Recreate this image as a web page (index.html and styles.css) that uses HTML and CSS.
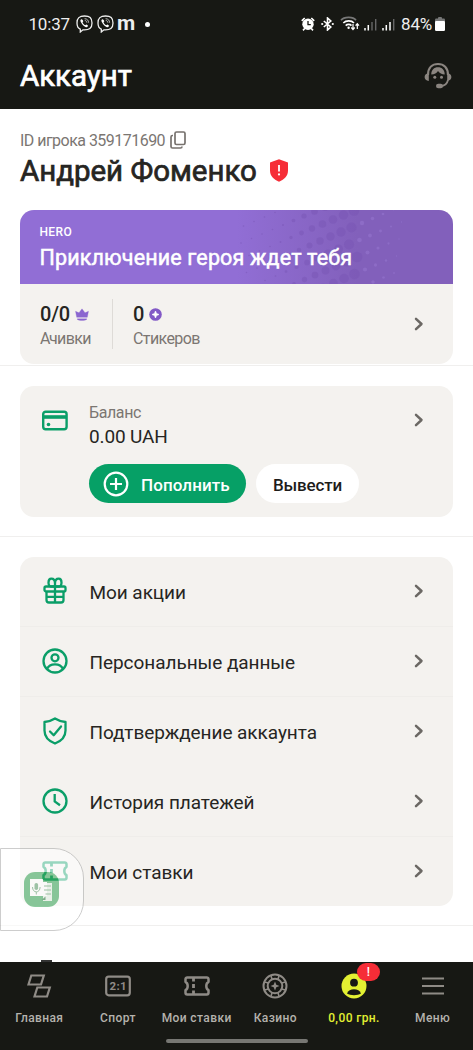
FILE: index.html
```
<!DOCTYPE html>
<html lang="ru">
<head>
<meta charset="utf-8">
<title>Аккаунт</title>
<link rel="stylesheet" href="styles.css">
</head>
<body>
<svg class="defs" width="0" height="0">
  <defs>
    <symbol id="chev" viewBox="0 0 12 16"><path d="M3 2.800 8.500 8 3 13.200" fill="none" stroke="#6b6864" stroke-width="2.500" stroke-linecap="round" stroke-linejoin="round"/></symbol>
    <symbol id="ticket" viewBox="0 0 26 20"><path d="M3.200 1.500h19.600a1.700 1.700 0 0 1 1.700 1.700v2.600c-1.500.8-2.200 2.300-2.200 4.200s.7 3.400 2.200 4.200v2.600a1.700 1.700 0 0 1-1.700 1.700H3.200a1.700 1.700 0 0 1-1.700-1.700v-2.600c1.500-.8 2.200-2.300 2.200-4.200s-.7-3.400-2.200-4.200V3.200a1.700 1.700 0 0 1 1.700-1.700z" fill="none" stroke="currentColor" stroke-width="2.500" stroke-linejoin="round"/><path d="M9.500 2v3.600M9.500 8v4M9.500 14.400V18" stroke="currentColor" stroke-width="2.800"/></symbol>
    <symbol id="viber" viewBox="0 0 17 18"><path d="M8.500 1C3.300 1 1 2.900 1 8c0 3.300 1 5.300 3.300 6.200V17l2.600-2.200c6.600.4 9.100-1.500 9.100-6.800S13.700 1 8.500 1z" fill="none" stroke="#eee" stroke-width="1.300"/><path d="M5.300 4.200c-1 .6-1.100 1.500-.6 2.600 1 2.300 2.500 4 4.800 5.100 1.200.6 2 .2 2.600-.8.300-.5-1.300-1.800-1.900-1.700-.5.100-.7.900-1.200.7C7.900 9.600 7 8.600 6.600 7.400c-.1-.5.700-.7.700-1.200 0-.6-1.300-2.300-2-2z" fill="#fff"/><path d="M8.600 3.700c2.600.1 3.900 1.600 4 4M8.800 5.500c1.400.2 2 .9 2.100 2.200" fill="none" stroke="#ddd" stroke-width=".8"/></symbol>
  </defs>
</svg>

<div class="screen">
  <header class="top">
    <div class="status">
      <span class="time">10:37</span>
      <svg class="vb" width="17" height="18"><use href="#viber"/></svg>
      <svg class="vb" width="17" height="18"><use href="#viber"/></svg>
      <b class="m">m</b>
      <i class="dot"></i>
      <div class="right">
        <svg width="14" height="14" viewBox="0 0 14 14"><path d="M.8 3.800 3.700 1M13.200 3.800 10.300 1M2 13.300l1.700-1.800M12 13.300l-1.700-1.800" stroke="#fff" stroke-width="1.700"/><circle cx="7" cy="7.300" r="5.700" fill="#fff"/><path d="M7 4v3.700h2.800" fill="none" stroke="#171814" stroke-width="1.300"/></svg>
        <svg class="bt" width="13" height="14" viewBox="0 0 13 14"><path d="M2.800 4 9.800 10 6.500 13V1l3.300 3-7 6" fill="none" stroke="#fff" stroke-width="1.600"/><circle cx="1.200" cy="7" r="1.100" fill="#fff"/><circle cx="11.800" cy="7" r="1.100" fill="#fff"/></svg>
        <svg class="wifi" width="20" height="15" viewBox="0 0 20 15"><g fill="none" stroke="#fff" stroke-width="1.600"><path d="M1 4.300C4 .6 13 .2 16 4.300" stroke="#777"/><path d="M3.300 7c2.700-2.900 8.200-2.900 10.700 0"/><path d="M5.700 9.600c1.600-1.600 4.300-1.600 5.800 0"/></g><circle cx="8.600" cy="11.800" r="1.200" fill="#fff"/><path d="M13 8v5M11.300 11.500 13 13.600l1.700-2.100M17.300 13V8M15.600 9.700l1.700-2.100L19 9.700" fill="none" stroke="#fff" stroke-width="1.200"/></svg>
        <svg class="sig" width="13" height="13" viewBox="0 0 13 13"><path d="M1 10v2.500M4.300 7v5.500" stroke="#fff" stroke-width="1.500"/><path d="M8 4v8.500M11.700 1v11.500" stroke="#666" stroke-width="1.400"/></svg>
        <svg class="sig2" width="13" height="13" viewBox="0 0 13 13"><path d="M1 10v2.500M4.300 7v5.500M8 4v8.500" stroke="#fff" stroke-width="1.500"/><path d="M11.700 1v11.500" stroke="#666" stroke-width="1.400"/></svg>
        <span class="pct">84%</span>
        <svg class="bat" width="10" height="14" viewBox="0 0 10 14"><rect x="3" y="0" width="4" height="3" rx="1" fill="#777"/><rect y="1.500" width="10" height="4" rx="1.200" fill="#777"/><rect y="4" width="10" height="10" rx="1.200" fill="#fff"/></svg>
      </div>
    </div>
    <div class="titlebar">
      <h1>Аккаунт</h1>
      <svg width="28" height="27" viewBox="0 0 28 27"><g fill="none" stroke="#8b8580"><path d="M4 13C4 5.500 8.200 2 14 2s10 3.500 10 11" stroke-width="2.200"/><path d="M24 18c-1 4.500-3.500 6-7.500 6.200" stroke-width="1.800"/></g><path d="M4.800 11v8C2.300 18.600.600 17.300.600 15s1.700-3.600 4.200-4zM23.200 11v8c2.500-.4 4.200-1.700 4.200-4s-1.700-3.600-4.200-4z" fill="#8b8580"/><path d="M7.300 12.500C7.300 8 10 5.300 14 5.300s6.700 2.700 6.700 7.200c-3-.3-5-1.200-6.700-3.500-1.400 2.200-3.400 3.200-6.700 3.500z" fill="#8b8580"/><circle cx="10.800" cy="15.200" r="1.500" fill="#8b8580"/><circle cx="17.500" cy="15.200" r="1.500" fill="#8b8580"/><rect x="12" y="21.700" width="7" height="4.600" rx="2.300" fill="#8b8580"/></svg>
    </div>
  </header>

  <main class="content">
    <section class="block who">
      <div class="pid"><span>ID игрока 359171690</span>
        <svg width="16" height="18" viewBox="0 0 16 18" fill="none" stroke="#77726e" stroke-width="1.700"><rect x="5" y="1" width="10" height="12.500" rx="1.500"/><path d="M3 4.500H2.500A1.500 1.500 0 0 0 1 6v9.500A1.500 1.500 0 0 0 2.500 17h8a1.500 1.500 0 0 0 1.500-1.500"/></svg>
      </div>
      <div class="name"><h2>Андрей Фоменко</h2>
        <svg width="20" height="23" viewBox="0 0 20 23"><path d="M10 .3 19 3.400v8c0 5.200-3.500 9-9 11.300C4.500 20.400 1 16.600 1 11.400v-8z" fill="#f62d37"/><path d="M10 6v6.500" stroke="#fff" stroke-width="1.800"/><circle cx="10" cy="15.400" r="1.100" fill="#fff"/></svg>
      </div>
      <div class="hero">
        <div class="banner">
          <svg class="dots" id="dots" width="433" height="74" viewBox="0 0 433 74"></svg>
          <div class="tag">HERO</div>
          <div class="slogan">Приключение героя ждет тебя</div>
        </div>
        <div class="stats">
          <div class="stat first">
            <div class="num">0/0 <svg width="14" height="13" viewBox="0 0 14 13"><path d="M.5 3.300 4 4.800 7 .8l3 4 3.500-1.500L12.300 9.300H1.700zM2.300 10.800h9.400v.6c-1.500 1.300-7.900 1.300-9.400 0z" fill="#8b66d0" stroke="#8b66d0" stroke-width=".3"/></svg></div>
            <div class="lbl">Ачивки</div>
          </div>
          <div class="stat">
            <div class="num">0 <svg width="13" height="13" viewBox="0 0 13 13"><circle cx="6.500" cy="6.500" r="6.300" fill="#8259c6"/><path d="M6.500 3 7.500 5.500l2.500 1-2.500 1-1 2.500-1-2.500-2.500-1 2.500-1z" fill="#fff" stroke="#fff" stroke-width=".7"/></svg></div>
            <div class="lbl">Стикеров</div>
          </div>
          <svg class="chev" width="12" height="16"><use href="#chev"/></svg>
        </div>
      </div>
    </section>

    <section class="block bal">
      <div class="card balance">
        <svg class="cc" width="26" height="21" viewBox="0 0 26 21"><rect x="1.200" y="1.700" width="23.400" height="17.600" rx="2.500" fill="none" stroke="#0a9e68" stroke-width="2.400"/><path d="M1 7h24" stroke="#0a9e68" stroke-width="3.600"/><circle cx="6.500" cy="14.500" r="1.800" fill="#0a9e68"/></svg>
        <div class="binfo">
          <div class="lbl">Баланс</div>
          <div class="sum">0.00 UAH</div>
          <div class="btns">
            <button class="btn green"><svg width="26" height="26" viewBox="0 0 26 26" fill="none" stroke="#fff" stroke-width="2.200"><circle cx="13" cy="13" r="11.300"/><path d="M13 7v12M7 13h12"/></svg>Пополнить</button>
            <button class="btn white">Вывести</button>
          </div>
        </div>
        <svg class="chev" width="12" height="16"><use href="#chev"/></svg>
      </div>
    </section>

    <section class="block list">
      <div class="card">
        <div class="row line"><span class="ic"><svg width="26" height="28" viewBox="0 0 26 28" fill="none" stroke="#0a9e68" stroke-width="2.300" stroke-linejoin="round"><rect x="2.500" y="9.500" width="21" height="5" rx="1.500"/><path d="M4.500 14.500V23a2.500 2.500 0 0 0 2.500 2.500h12a2.500 2.500 0 0 0 2.500-2.500v-8.500M13 9.500v16M5 19.800h16M13 9.500H8.800C5.800 9.500 5.500 1.700 9.300 1.700c2.700 0 3.700 2.300 3.700 4.800zM13 9.500h4.200c3 0 3.300-7.800-.5-7.800-2.700 0-3.700 2.300-3.700 4.800z"/></svg></span><span class="t">Мои акции</span><svg class="chev" width="12" height="16"><use href="#chev"/></svg></div>
        <div class="row line"><span class="ic"><svg width="26" height="26" viewBox="0 0 26 26" fill="none" stroke="#0a9e68" stroke-width="2.300"><circle cx="13" cy="13" r="11.500"/><circle cx="13" cy="9.800" r="3.500"/><path d="M5 21c1.500-3.400 4.300-4.700 8-4.700s6.500 1.300 8 4.700"/></svg></span><span class="t">Персональные данные</span><svg class="chev" width="12" height="16"><use href="#chev"/></svg></div>
        <div class="row"><span class="ic"><svg width="24" height="28" viewBox="0 0 24 28" fill="none" stroke="#0a9e68" stroke-width="2.300" stroke-linejoin="round" stroke-linecap="round"><path d="M12 1.500C8.500 3.700 5 4.800 1.500 5v8.500c0 5.800 4 10.500 10.500 13 6.500-2.500 10.500-7.200 10.500-13V5C19 4.800 15.500 3.700 12 1.500z"/><path d="m7 14.500 3.700 3.800L18 9.500"/></svg></span><span class="t">Подтверждение аккаунта</span><svg class="chev" width="12" height="16"><use href="#chev"/></svg></div>
        <div class="row line"><span class="ic"><svg width="26" height="26" viewBox="0 0 26 26" fill="none" stroke="#0a9e68" stroke-width="2.300"><circle cx="13" cy="13" r="11.500"/><path d="M12.700 6v7.500l5.300 3.700"/></svg></span><span class="t">История платежей</span><svg class="chev" width="12" height="16"><use href="#chev"/></svg></div>
        <div class="row"><span class="ic"><svg class="tk" width="26" height="20"><use href="#ticket"/></svg></span><span class="t">Мои ставки</span><svg class="chev" width="12" height="16"><use href="#chev"/></svg></div>
      </div>
    </section>
    <section class="peek"><i></i></section>
  </main>

  <nav class="nav">
    <div class="tabs">
      <div class="tab"><span class="ni"><svg width="26" height="26" viewBox="0 0 26 26" fill="none" stroke="currentColor" stroke-width="2.200"><path d="M5.300 2.500h12.500l-2.800 9H2.500zM11.300 14.500h12.500l-2.800 9H8.500z"/></svg></span>Главная</div>
      <div class="tab"><span class="ni"><svg width="26" height="22" viewBox="0 0 26 22"><rect x="1.200" y="1.700" width="23.600" height="18.600" rx="2.500" fill="none" stroke="currentColor" stroke-width="2.200"/><text class="score" x="13.300" y="15" text-anchor="middle">2:1</text></svg></span>Спорт</div>
      <div class="tab"><span class="ni"><svg width="26" height="20"><use href="#ticket"/></svg></span>Мои ставки</div>
      <div class="tab"><span class="ni"><svg width="26" height="26" viewBox="0 0 26 26" fill="none" stroke="currentColor" stroke-width="2"><circle cx="13" cy="13" r="11.500"/><circle cx="13" cy="13" r="7.300"/><path d="M10 6.500 9 2.500M16 6.500 17 2.500M10 19.500 9 23.500M16 19.500 17 23.500M6.500 10 2.500 9M6.500 16 2.500 17M19.500 10 23.500 9M19.500 16 23.500 17" stroke-width="1.600"/><path d="m13 8.500 1.300 3.200 3.200 1.300-3.200 1.300L13 17.500l-1.300-3.200L8.500 13l3.200-1.300z" fill="currentColor" stroke="none"/></svg></span>Казино</div>
      <div class="tab active"><span class="ni"><svg width="26" height="26" viewBox="0 0 26 26"><circle cx="13" cy="13" r="12.500" fill="#e3f032"/><circle cx="13" cy="9.700" r="3.900" fill="#171814"/><path d="M6 20.600c1.200-3.200 3.700-4.400 7-4.400s5.800 1.200 7 4.400c-3.600 2.200-10.400 2.200-14 0z" fill="#171814"/></svg><b class="badge">!</b></span>0,00 грн.</div>
      <div class="tab"><span class="ni"><svg width="24" height="20" viewBox="0 0 24 20"><path d="M1 2.500h22M1 10h22M1 17.500h22" stroke="currentColor" stroke-width="2.200"/></svg></span>Меню</div>
    </div>
    <div class="home"></div>
  </nav>

  <div class="float">
    <svg width="38" height="38" viewBox="0 0 38 38"><rect x="1" y="1" width="35" height="35" rx="11" fill="#3aa65a"/><path d="M22 12h7v18h-9v-5h2z" fill="#e2f0e4"/><path d="M7 8h13v3h4v14H7z" fill="#fff"/><path d="M21 15h7M21 19h7M22.500 23H28" stroke="#5b9c69" stroke-width="1.100"/><rect x="11.500" y="12" width="3.600" height="7" rx="1.800" fill="#5fa070"/><path d="M9.500 16c0 6.500 7.600 6.500 7.600 0M13.300 21v2.500" fill="none" stroke="#5fa070"/><path d="m18.500 29 4-3.500v3.500z" fill="#2b7a40"/></svg>
  </div>
</div>
<script src="dots.js"></script>
</body>
</html>
```
FILE: styles.css
```
* { box-sizing: border-box; }
body { margin: 0; font-family: Roboto, sans-serif; color: #262522; background: #fff; }
h1, h2 { margin: 0; font-weight: 400; }
svg { display: block; flex: none; }
.defs { position: absolute; }
.screen { position: relative; width: 473px; height: 1050px; display: flex; flex-direction: column; overflow: hidden; }

.top { height: 109px; background: #171814; color: #fff; flex: none; }
.status { height: 47px; padding: 0 28px 0 28.500px; display: flex; align-items: center; color: #eee; }
.time { font-size: 17px; letter-spacing: -.2px; width: 47.500px; }
.vb { margin-right: 4px; }
.m { font-size: 21px; line-height: 20px; width: 24px; margin-top: -1px; margin-left: -1px; }
.dot { width: 5px; height: 5px; border-radius: 50%; background: #fff; margin-left: 4px; margin-top: 1px; }
.right { margin-left: auto; display: flex; align-items: center; }
.bt { margin-left: 6px; }
.wifi { margin-left: 6px; }
.sig, .sig2 { margin-left: 4px; margin-top: 1px; }
.sig2 { margin-left: 5px; }
.pct { font-size: 17px; letter-spacing: -.2px; margin-left: 6px; }
.bat { margin-left: 3px; }
.titlebar { height: 58px; padding: 0 21px 2px 20px; display: flex; align-items: center; justify-content: space-between; }
h1 { font-size: 29.500px; -webkit-text-stroke: .7px #fff; letter-spacing: -.05px; padding-top: 2px; }

.content { flex: 1; overflow: hidden; }
.block { padding: 0 20px; border-bottom: 1px solid #f0efee; }
.who { padding-top: 20px; height: 257px; }
.pid { height: 22px; display: flex; align-items: center; font-size: 16px; letter-spacing: -.53px; color: #7b7672; }
.pid svg { margin-left: 5px; margin-top: -1px; }
.name { height: 39px; display: flex; align-items: center; padding-top: 1px; }
.name h2 { font-size: 29.500px; letter-spacing: -.03px; -webkit-text-stroke: .7px #262522; white-space: nowrap; width: 237px; }
.name svg { margin-left: 12px; margin-top: -2px; }
.hero { margin-top: 20px; height: 154px; border-radius: 14px; overflow: hidden; background: #f4f2ef; }
.banner { position: relative; height: 74px; padding: 15px 20px 0 19.500px; color: #fff; background: linear-gradient(90deg, #916ed5 0, #916ed5 50%, #8260bb 78%, #8260bb 100%); }
.dots { position: absolute; left: 0; top: 0; }
.tag, .slogan { position: relative; }
.tag { font-size: 12px; line-height: 14px; font-weight: 500; letter-spacing: .35px; }
.slogan { margin-top: 5px; font-size: 21.500px; line-height: 27px; letter-spacing: .15px; -webkit-text-stroke: .5px #fff; white-space: nowrap; }
.stats { height: 80px; padding: 0 28px 0 20px; display: flex; align-items: center; }
.stat { height: 50px; padding-top: 3px; }
.first { width: 73px; margin-right: 20px; border-right: 1px solid #dedbd7; }
.num { font-size: 20px; line-height: 25px; font-weight: 500; letter-spacing: -.15px; display: flex; align-items: center; gap: 5px; }
.lbl { font-size: 16px; line-height: 22px; letter-spacing: -.6px; color: #7b7672; }
.stat .lbl { margin-top: 1px; }
.chev { margin-left: auto; }
.card { background: #f4f2ef; border-radius: 14px; }

.bal { padding-top: 20px; height: 171px; }
.balance { height: 131px; padding: 16px 28px 0 22px; display: flex; align-items: flex-start; }
.cc { margin-top: 8px; }
.balance .chev { margin-top: 10px; }
.binfo { margin-left: 21px; }
.bal .lbl { letter-spacing: -.4px; }
.sum { font-size: 19px; line-height: 26px; letter-spacing: -.15px; }
.btns { margin-top: 14px; display: flex; gap: 10px; }
.btn { border: 0; height: 39px; border-radius: 20px; font: 500 17px Roboto, sans-serif; display: flex; align-items: center; padding: 2px 0 0; white-space: nowrap; }
.green { width: 157px; padding-left: 14px; gap: 12px; background: #06a066; color: #fff; letter-spacing: .1px; }
.green svg { margin-top: -2px; }
.white { width: 103px; background: #fff; color: #1d1c1a; justify-content: center; letter-spacing: -.15px; }

.list { padding-top: 20px; height: 389px; }
.list .card { height: 349px; }
.row { height: 70px; padding: 0 28px 3px 20px; display: flex; align-items: center; }
.row.line { box-shadow: inset 0 -1px #efedea; }
.ic { width: 29px; display: flex; justify-content: center; }
.t { font-size: 19px; letter-spacing: -.06px; margin-left: 20.500px; padding-top: 4px; }
.tk { color: #0a9e68; }
.peek { height: 36px; padding: 34px 0 0 41px; }
.peek i { display: block; width: 11px; height: 2px; background: #333; }

.nav { height: 88px; background: #171814; flex: none; }
.tabs { display: grid; grid-template-columns: repeat(6, 1fr); height: 76px; margin-right: 1px; }
.tab { display: flex; flex-direction: column; align-items: center; color: #b5b2ad; font-size: 12px; line-height: 16px; font-weight: 500; letter-spacing: .4px; white-space: nowrap; }
.ni { height: 48px; display: flex; align-items: center; position: relative; color: #8f8b86; }
.score { font: 700 11.500px Roboto, sans-serif; letter-spacing: .4px; fill: #8f8b86; }
.active { color: #e3f032; }
.badge { position: absolute; left: 16px; top: 1px; width: 23px; height: 18px; border-radius: 9px; background: #f62d37; color: #fff; font-size: 12px; line-height: 18px; text-align: center; font-weight: 500; }
.home { width: 142px; height: 4px; border-radius: 2px; background: #777773; margin: 1px auto 0; }

.float { position: absolute; left: 0; top: 848px; width: 84px; height: 83px; border: 1.500px solid #aaa; border-radius: 0 30px 30px 0; background: #fff; opacity: .58; padding: 22px 0 0 22px; }
```
FILE: dots.js
```
// Halftone pattern: dots grow toward the middle of the band, then turn into light specks.
const svg = document.getElementById('dots');
const ns = 'http://www.w3.org/2000/svg';
for (let i = -6; i < 18; i++) {
  for (let j = -8; j < 14; j++) {
    const x = 215 + i * 18.5 + j * 8;
    const y = -60 + i * 8 + j * 12.5;
    if (x < 218 || x > 384 || y < -5 || y > 80) continue;
    const d = x - 338;
    const light = d > 0;
    const r = light ? Math.max(0.7, 2.4 - d / 24) : Math.max(0.8, 5.4 + d / 22 - Math.max(0, -40 - d) / 40);
    const c = document.createElementNS(ns, 'circle');
    c.setAttribute('cx', x);
    c.setAttribute('cy', y);
    c.setAttribute('r', r);
    c.setAttribute('fill', light ? '#9878d2' : '#7855b3');
    c.setAttribute('opacity', light ? 0.5 : 0.45);
    svg.append(c);
  }
}
```
